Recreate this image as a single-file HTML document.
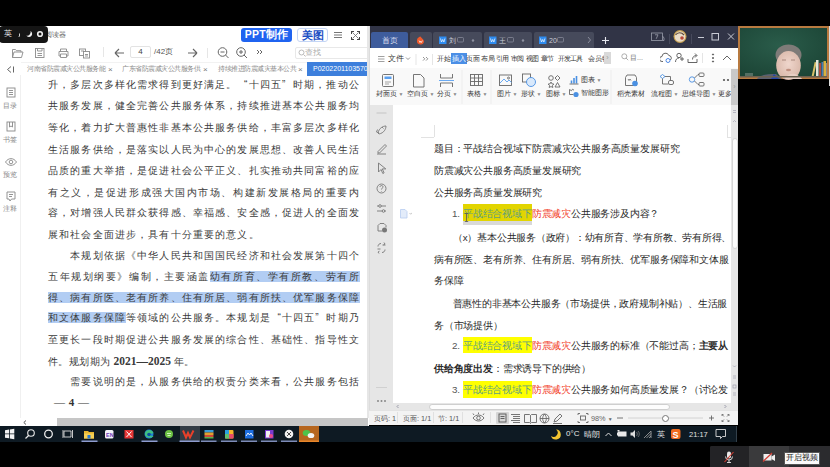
<!DOCTYPE html>
<html><head><meta charset="utf-8">
<style>
*{box-sizing:border-box;margin:0;padding:0}
html,body{width:830px;height:467px;overflow:hidden;background:#000}
body{position:relative;font-family:"Liberation Sans",sans-serif}
.a{position:absolute}
.t{position:absolute;white-space:nowrap;line-height:1}
/* PDF */
#pdf{left:0;top:26px;width:369px;height:400px;background:#fff;overflow:hidden}
.pl{position:absolute;left:48px;font-family:"Liberation Sans",sans-serif;font-size:10px;letter-spacing:1.14px;color:#3a3a3a;white-space:nowrap;line-height:12px}
.q{display:inline-block;width:11.14px;text-align:right}.q2{display:inline-block;width:11.14px;text-align:left}
.hl{background:#b2cdf3}
/* WPS */
#wps{left:369px;top:26px;width:369px;height:399px;background:#fff;overflow:hidden}
.wl{position:absolute;font-size:9.8px;letter-spacing:-0.2px;color:#2a2a2a;white-space:nowrap;line-height:12px}
.yl{color:#5f9f80}
.rd{color:#f23a26}
#task{left:0;top:426px;width:737px;height:16px;background:#0e1a23}
i{font-style:normal;display:inline-block;width:var(--cw)}
.tofu i{position:relative;-webkit-text-fill-color:transparent}
.tofu i::after{content:"";position:absolute;left:0.06em;width:0.86em;top:50%;height:0.82em;margin-top:-0.45em;box-sizing:border-box;border:0.1em solid currentColor;opacity:.62;background:linear-gradient(currentColor,currentColor) 50% 50%/100% 0.1em no-repeat,linear-gradient(currentColor,currentColor) 50% 50%/0.1em 100% no-repeat}
.tofu i:nth-child(3n+1)::after{border-width:0.1em 0;background:linear-gradient(currentColor,currentColor) 50% 50%/100% 0.1em no-repeat,linear-gradient(currentColor,currentColor) 30% 50%/0.1em 100% no-repeat,linear-gradient(currentColor,currentColor) 75% 50%/0.1em 100% no-repeat}
.tofu i:nth-child(4n+2)::after{border-width:0.1em;background:linear-gradient(currentColor,currentColor) 50% 35%/100% 0.1em no-repeat,linear-gradient(currentColor,currentColor) 50% 70%/100% 0.1em no-repeat}
.tofu i.p::after{left:0.12em;width:0.22em;height:0.22em;margin-top:0.12em;border:0;background:currentColor;opacity:.7}
.tofu i.s::after{display:none}
.tofu .pl i::after{opacity:.56}
.tofu .wl i::after{opacity:.72}
.tofu .pl i.p::after,.tofu .wl i.p::after{opacity:.7}

</style><script>(function(){try{var c=document.createElement('canvas');c.width=24;c.height=24;var x=c.getContext('2d');x.font='18px "Liberation Sans"';x.fillText('\u5347',2,19);var a=Array.prototype.join.call(x.getImageData(0,0,24,24).data);x.clearRect(0,0,24,24);x.fillText('\u591a',2,19);var b=Array.prototype.join.call(x.getImageData(0,0,24,24).data);if(a===b)document.documentElement.className+=' tofu';}catch(e){}})();</script></head><body>

<!-- PDF viewer -->
<div id="pdf" class="a">
  <!-- title row -->
  <div class="t" style="left: 45px; top: 5px; font-size: 7px; color: rgb(102, 102, 102); --cw: 7px;"><i>阅</i><i>读</i><i>器</i></div>
  <div class="a" style="left: 241px; top: 2px; width: 51px; height: 13.5px; background: rgb(31, 99, 240); border-radius: 3px; color: rgb(255, 255, 255); font-weight: bold; font-size: 10.5px; line-height: 13.5px; text-align: center; letter-spacing: 0.2px; --cw: 11.219px;">PPT<i>制</i><i>作</i></div>
  <div class="a" style="left: 297px; top: 2px; width: 31px; height: 14px; background: rgb(255, 255, 255); border: 1px solid rgb(196, 213, 245); border-radius: 3px; color: rgb(29, 79, 196); font-weight: bold; font-size: 10.5px; line-height: 12px; text-align: center; --cw: 11px;"><i>美</i><i>图</i></div>
  <svg class="a" style="left:332px;top:4px" width="12" height="10"><path d="M2 2.5H10M2 5H10M2 7.5H10" stroke="#666" stroke-width="0.9"></path></svg>
  <svg class="a" style="left:350px;top:4px" width="11" height="11"><path d="M2.5 2.5L8.5 8.5M8.5 2.5L2.5 8.5" stroke="#666" stroke-width="0.8"></path><path d="M1 1h3v1H2v2H1zM10 1H7v1h2v2h1zM1 10h3V9H2V7H1zM10 10H7V9h2V7h1z" fill="#444"></path></svg>
  <!-- toolbar -->
  <svg class="a" style="left:11px;top:21px" width="82" height="12" fill="none" stroke="#8a8a8a" stroke-width="0.9">
    <path d="M1.5 2.5h3l1 1.2h4.5v1.5M1.5 2.5v8h9l1.5-5.5h-9l-1.5 5.5"></path>
    <rect x="24.5" y="1.5" width="8.5" height="9"></rect><path d="M26.5 1.5v2.5h4.5v-2.5M26.5 6.5h4.5M26.5 8.5h4.5"></path>
    <path d="M48 4.5h9v4.5h-1.5M48 4.5v4.5h1.5M49.5 4.5v-2.5h6v2.5M49.5 7h6v3.5h-6z"></path>
    <rect x="68.5" y="2" width="6" height="6.5"></rect><rect x="72.5" y="4.5" width="6" height="6.5" fill="#fff"></rect><path d="M70 4h3M74 7.5h3M74 9h3"></path>
  </svg>
  <div class="a" style="left:103px;top:21px;width:1px;height:10px;background:#e6e6e6"></div>
  <svg class="a" style="left:113px;top:21px" width="12" height="12"><path d="M2 6h9M2 6l4-4M2 6l4 4" stroke="#666" stroke-width="1.1" fill="none"></path></svg>
  <div class="a" style="left:130px;top:20px;width:21px;height:12px;border:1px solid #e3e3e3;border-radius:2px;font-size:8px;color:#444;text-align:center;line-height:10px">4</div>
  <div class="t" style="left: 154px; top: 22px; font-size: 8px; color: rgb(85, 85, 85); --cw: 8.016px;">/42<i>页</i></div>
  <svg class="a" style="left:187px;top:21px" width="12" height="12"><path d="M1 6h9M10 6l-4-4M10 6l-4 4" stroke="#666" stroke-width="1.1" fill="none"></path></svg>
  <div class="a" style="left:207px;top:22px;width:1px;height:10px;background:#e6e6e6"></div>
  <svg class="a" style="left:216px;top:20px" width="50" height="14" fill="none" stroke="#666" stroke-width="1">
    <circle cx="6.5" cy="6" r="4.3"></circle><path d="M4.5 6h4M9.5 9l3 3"></path>
    <circle cx="25" cy="6" r="4.3"></circle><path d="M23 6h4M25 4v4M28 9l3 3"></path>
    <path d="M41 4l2 2-2 2M44 4l2 2-2 2"></path>
  </svg>
  <div class="a" style="left:295px;top:21px;width:80px;height:12px;border:1px solid #e8e8e8;border-radius:2px"></div>
  <svg class="a" style="left:298px;top:23px" width="8" height="8"><circle cx="3.5" cy="3.5" r="2.5" stroke="#bbb" fill="none"></circle><path d="M5.5 5.5l2 2" stroke="#bbb"></path></svg>
  <div class="t" style="left: 305px; top: 23px; font-size: 8px; color: rgb(170, 170, 170); --cw: 8px;"><i>查</i><i>找</i></div>
  <!-- tabs -->
  <svg class="a" style="left:6px;top:39px" width="9" height="9"><path d="M5 1.5L1.5 4.5 5 7.5M7.5 1.5v6" stroke="#666" fill="none" stroke-width="1"></path></svg>
  <div class="a" style="left:21px;top:36px;width:348px;height:1px;background:#f2f2f2"></div>
  <div class="t" style="left: 27px; top: 40px; font-size: 6.5px; letter-spacing: -0.5px; color: rgb(138, 138, 138); --cw: 6.5px;"><i>河</i><i>南</i><i>省</i><i>防</i><i>震</i><i>减</i><i>灾</i><i>公</i><i>共</i><i>服</i><i>务</i><i>能</i></div><div class="t" style="left:108px;top:39.5px;font-size:8px;color:#777">×</div>
  <div class="t" style="left: 122px; top: 40px; font-size: 6.5px; letter-spacing: -0.5px; color: rgb(138, 138, 138); --cw: 6.5px;"><i>广</i><i>东</i><i>省</i><i>防</i><i>震</i><i>减</i><i>灾</i><i>公</i><i>共</i><i>服</i><i>务</i><i>供</i></div><div class="t" style="left:203px;top:39.5px;font-size:8px;color:#777">×</div>
  <div class="t" style="left: 218px; top: 40px; font-size: 6.5px; letter-spacing: -0.5px; color: rgb(138, 138, 138); --cw: 6.5px;"><i>持</i><i>续</i><i>推</i><i>进</i><i>防</i><i>震</i><i>减</i><i>灾</i><i>基</i><i>本</i><i>公</i><i>共</i></div><div class="t" style="left:298px;top:39.5px;font-size:8px;color:#777">×</div>
  <div class="a" style="left:307px;top:36px;width:62px;height:13.5px;background:#3d7fdc;color:#fff;font-size:7px;line-height:13.5px;padding-left:6px;white-space:nowrap;overflow:hidden">P02022011035704</div>
  <div class="a" style="left:20px;top:49px;width:1px;height:343px;background:#f0f0f0"></div>
  <div class="a" style="left:367px;top:0;width:2px;height:400px;background:#e6e6e6"></div>
  <!-- sidebar -->
  <svg class="a" style="left:3.5px;top:59px" width="14" height="125" fill="none" stroke="#888" stroke-width="0.9">
    <rect x="3" y="3" width="8" height="9"></rect><path d="M5 5.5h4M5 7.5h4M5 9.5h4"></path>
    <rect x="3" y="37" width="8" height="9"></rect><path d="M5.5 37v5l1.5-1 1.5 1v-5"></path>
    <path d="M1.5 77c3-4.5 8-4.5 11 0c-3 4.5-8 4.5-11 0z"></path><circle cx="7" cy="77" r="1.8"></circle>
    <path d="M3 107h8v7H7.5l-1.5 2-1-2H3z"></path><path d="M5 109.5h4M5 111.5h3"></path>
  </svg>
  <div class="t" style="left: 3px; top: 75.5px; font-size: 7px; color: rgb(136, 136, 136); --cw: 7px;"><i>目</i><i>录</i></div>
  <div class="t" style="left: 3px; top: 110px; font-size: 7px; color: rgb(136, 136, 136); --cw: 7px;"><i>书</i><i>签</i></div>
  <div class="t" style="left: 3px; top: 144.5px; font-size: 7px; color: rgb(136, 136, 136); --cw: 7px;"><i>预</i><i>览</i></div>
  <div class="t" style="left: 3px; top: 178.5px; font-size: 7px; color: rgb(136, 136, 136); --cw: 7px;"><i>注</i><i>释</i></div>
  <!-- content -->
  <div class="pl" style="top: 53px; --cw: 11.141px;"><i>升</i><i class="p">，</i><i>多</i><i>层</i><i>次</i><i>多</i><i>样</i><i>化</i><i>需</i><i>求</i><i>得</i><i>到</i><i>更</i><i>好</i><i>满</i><i>足</i><i class="p">。</i><span class="q">“</span><i>十</i><i>四</i><i>五</i><span class="q2">”</span><i>时</i><i>期</i><i class="p">，</i><i>推</i><i>动</i><i>公</i></div>
  <div class="pl" style="top: 74px; --cw: 11.141px;"><i>共</i><i>服</i><i>务</i><i>发</i><i>展</i><i class="p">，</i><i>健</i><i>全</i><i>完</i><i>善</i><i>公</i><i>共</i><i>服</i><i>务</i><i>体</i><i>系</i><i class="p">，</i><i>持</i><i>续</i><i>推</i><i>进</i><i>基</i><i>本</i><i>公</i><i>共</i><i>服</i><i>务</i><i>均</i></div>
  <div class="pl" style="top: 96px; --cw: 11.141px;"><i>等</i><i>化</i><i class="p">，</i><i>着</i><i>力</i><i>扩</i><i>大</i><i>普</i><i>惠</i><i>性</i><i>非</i><i>基</i><i>本</i><i>公</i><i>共</i><i>服</i><i>务</i><i>供</i><i>给</i><i class="p">，</i><i>丰</i><i>富</i><i>多</i><i>层</i><i>次</i><i>多</i><i>样</i><i>化</i></div>
  <div class="pl" style="top: 118px; --cw: 11.141px;"><i>生</i><i>活</i><i>服</i><i>务</i><i>供</i><i>给</i><i class="p">，</i><i>是</i><i>落</i><i>实</i><i>以</i><i>人</i><i>民</i><i>为</i><i>中</i><i>心</i><i>的</i><i>发</i><i>展</i><i>思</i><i>想</i><i class="p">、</i><i>改</i><i>善</i><i>人</i><i>民</i><i>生</i><i>活</i></div>
  <div class="pl" style="top: 139px; --cw: 11.141px;"><i>品</i><i>质</i><i>的</i><i>重</i><i>大</i><i>举</i><i>措</i><i class="p">，</i><i>是</i><i>促</i><i>进</i><i>社</i><i>会</i><i>公</i><i>平</i><i>正</i><i>义</i><i class="p">、</i><i>扎</i><i>实</i><i>推</i><i>动</i><i>共</i><i>同</i><i>富</i><i>裕</i><i>的</i><i>应</i></div>
  <div class="pl" style="top: 161px; letter-spacing: 1.55px; --cw: 11.563px;"><i>有</i><i>之</i><i>义</i><i class="p">，</i><i>是</i><i>促</i><i>进</i><i>形</i><i>成</i><i>强</i><i>大</i><i>国</i><i>内</i><i>市</i><i>场</i><i class="p">、</i><i>构</i><i>建</i><i>新</i><i>发</i><i>展</i><i>格</i><i>局</i><i>的</i><i>重</i><i>要</i><i>内</i></div>
  <div class="pl" style="top: 181px; --cw: 11.141px;"><i>容</i><i class="p">，</i><i>对</i><i>增</i><i>强</i><i>人</i><i>民</i><i>群</i><i>众</i><i>获</i><i>得</i><i>感</i><i class="p">、</i><i>幸</i><i>福</i><i>感</i><i class="p">、</i><i>安</i><i>全</i><i>感</i><i class="p">，</i><i>促</i><i>进</i><i>人</i><i>的</i><i>全</i><i>面</i><i>发</i></div>
  <div class="pl" style="top: 203px; --cw: 11.141px;"><i>展</i><i>和</i><i>社</i><i>会</i><i>全</i><i>面</i><i>进</i><i>步</i><i class="p">，</i><i>具</i><i>有</i><i>十</i><i>分</i><i>重</i><i>要</i><i>的</i><i>意</i><i>义</i><i class="p">。</i></div>
  <div class="pl" style="top: 224px; --cw: 11.141px;"><i class="s">　</i><i class="s">　</i><i>本</i><i>规</i><i>划</i><i>依</i><i>据</i><i class="p">《</i><i>中</i><i>华</i><i>人</i><i>民</i><i>共</i><i>和</i><i>国</i><i>国</i><i>民</i><i>经</i><i>济</i><i>和</i><i>社</i><i>会</i><i>发</i><i>展</i><i>第</i><i>十</i><i>四</i><i>个</i></div>
  <div class="pl" style="top: 245px; letter-spacing: 1.55px; --cw: 11.563px;"><i>五</i><i>年</i><i>规</i><i>划</i><i>纲</i><i>要</i><i class="p">》</i><i>编</i><i>制</i><i class="p">，</i><i>主</i><i>要</i><i>涵</i><i>盖</i><span class="hl" style="--cw: 11.563px;"><i>幼</i><i>有</i><i>所</i><i>育</i><i class="p">、</i><i>学</i><i>有</i><i>所</i><i>教</i><i class="p">、</i><i>劳</i><i>有</i><i>所</i></span></div>
  <div class="pl" style="top:266px"><span class="hl" style="--cw: 11.141px;"><i>得</i><i class="p">、</i><i>病</i><i>有</i><i>所</i><i>医</i><i class="p">、</i><i>老</i><i>有</i><i>所</i><i>养</i><i class="p">、</i><i>住</i><i>有</i><i>所</i><i>居</i><i class="p">、</i><i>弱</i><i>有</i><i>所</i><i>扶</i><i class="p">、</i><i>优</i><i>军</i><i>服</i><i>务</i><i>保</i><i>障</i></span></div>
  <div class="pl" style="top: 286px; --cw: 11.141px;"><span class="hl" style="--cw: 11.141px;"><i>和</i><i>文</i><i>体</i><i>服</i><i>务</i><i>保</i><i>障</i></span><i>等</i><i>领</i><i>域</i><i>的</i><i>公</i><i>共</i><i>服</i><i>务</i><i class="p">。</i><i>本</i><i>规</i><i>划</i><i>是</i><span class="q">“</span><i>十</i><i>四</i><i>五</i><span class="q2">”</span><i>时</i><i>期</i><i>乃</i></div>
  <div class="pl" style="top: 308px; --cw: 11.141px;"><i>至</i><i>更</i><i>长</i><i>一</i><i>段</i><i>时</i><i>期</i><i>促</i><i>进</i><i>公</i><i>共</i><i>服</i><i>务</i><i>发</i><i>展</i><i>的</i><i>综</i><i>合</i><i>性</i><i class="p">、</i><i>基</i><i>础</i><i>性</i><i class="p">、</i><i>指</i><i>导</i><i>性</i><i>文</i></div>
  <div class="pl" style="top: 329px; letter-spacing: 0.45px; --cw: 10.453px;"><i>件</i><i class="p">。</i><i>规</i><i>划</i><i>期</i><i>为</i><span style="letter-spacing:0;font-family:'Liberation Serif',serif;font-size:11.5px;font-weight:bold;color:#3a3a3a"> 2021—2025 </span><i>年</i><i class="p">。</i></div>
  <div class="pl" style="top: 350px; --cw: 11.141px;"><i class="s">　</i><i class="s">　</i><i>需</i><i>要</i><i>说</i><i>明</i><i>的</i><i>是</i><i class="p">，</i><i>从</i><i>服</i><i>务</i><i>供</i><i>给</i><i>的</i><i>权</i><i>责</i><i>分</i><i>类</i><i>来</i><i>看</i><i class="p">，</i><i>公</i><i>共</i><i>服</i><i>务</i><i>包</i><i>括</i></div>
  <div class="pl" style="top:369.5px;left:54px;font-family:'Liberation Serif',serif;font-size:11px;letter-spacing:0.5px;font-weight:bold;color:#333">— 4 —</div>
  <!-- h scrollbar -->
  <div class="a" style="left:0;top:392px;width:369px;height:8px;background:#fff"></div>
  <div class="a" style="left:57px;top:392px;width:311px;height:8px;background:#c6c6c6"></div>
  <svg class="a" style="left:22px;top:393px" width="6" height="7"><path d="M4 1.5L1.8 3.5 4 5.5" fill="none" stroke="#444" stroke-width="0.9"></path></svg>
</div>

<!-- IME toolbar -->
<div class="a" style="left:-1px;top:26px;width:49px;height:16.5px;background:#151515;border-radius:4px"></div>
<div class="t" style="left: 4px; top: 30px; font-size: 8px; color: rgb(238, 238, 238); --cw: 8px;"><i>英</i></div>
<svg class="a" style="left:16px;top:28px" width="30" height="12"><path d="M3.5 5.5v2.5l-0.8 1" stroke="#ccc" stroke-width="1" fill="none"></path><path d="M14.5 3a3.2 3.2 0 1 1-4.2 4.6 3.6 3.6 0 0 0 4.2-4.6z" fill="#eee"></path><circle cx="24" cy="6" r="2.3" fill="none" stroke="#eee" stroke-width="1.6"></circle></svg>

<!-- WPS -->
<div id="wps" class="a">
  <div class="a" style="left:0;top:0;width:369px;height:21.5px;background:#313446"></div>
  <div class="a" style="left: 2px; top: 6px; width: 37px; height: 15.5px; background: rgb(62, 92, 156); border-radius: 2px 2px 0px 0px; color: rgb(216, 222, 240); font-size: 7.5px; line-height: 17px; text-align: center; --cw: 8px;"><i>首</i><i>页</i></div>
  <div class="a" style="left:41px;top:6px;width:22px;height:15.5px;background:#464a5b;border-radius:2px 2px 0 0"></div>
  <svg class="a" style="left:47px;top:10px" width="9" height="9"><path d="M1 4.5C1 1.5 4 0.5 4.5 0.5 5 2 8 3 8 5.5A3.5 3.5 0 0 1 1 4.5z" fill="#ee5a2c"></path><path d="M3 4.5l1 2 0.7-1.3 0.7 1.3 1-2" stroke="#fff" stroke-width="0.7" fill="none"></path></svg>
  <div class="a" style="left:64px;top:6px;width:49px;height:15.5px;background:#464a5b;border-radius:2px 2px 0 0"></div>
  <div class="a" style="left:115px;top:6px;width:48px;height:15.5px;background:#464a5b;border-radius:2px 2px 0 0"></div>
  <div class="a" style="left:165px;top:6px;width:60px;height:15.5px;background:#464a5b;border-radius:2px 2px 0 0"></div>
  <svg class="a" style="left:69px;top:10px" width="160" height="9">
    <rect x="1" y="0.5" width="7.5" height="7.5" fill="#2f8cf0"></rect><path d="M2.5 2.5l1 3.5 1.2-2.5 1.2 2.5 1-3.5" stroke="#fff" stroke-width="0.7" fill="none"></path>
    <rect x="19.5" y="1.5" width="6" height="4.5" rx="1" fill="none" stroke="#8e91a0" stroke-width="0.7"></rect><circle cx="35" cy="4.5" r="1.2" fill="#8e91a0"></circle>
    <rect x="51" y="0.5" width="7.5" height="7.5" fill="#2f8cf0"></rect><path d="M52.5 2.5l1 3.5 1.2-2.5 1.2 2.5 1-3.5" stroke="#fff" stroke-width="0.7" fill="none"></path>
    <rect x="69.5" y="1.5" width="6" height="4.5" rx="1" fill="none" stroke="#8e91a0" stroke-width="0.7"></rect><circle cx="85" cy="4.5" r="1.2" fill="#8e91a0"></circle>
    <rect x="101" y="0.5" width="7.5" height="7.5" fill="#2f8cf0"></rect><path d="M102.5 2.5l1 3.5 1.2-2.5 1.2 2.5 1-3.5" stroke="#fff" stroke-width="0.7" fill="none"></path>
    <rect x="119.5" y="1.5" width="6" height="4.5" rx="1" fill="none" stroke="#8e91a0" stroke-width="0.7"></rect><path d="M150 1l2.5 3-2.5 3" stroke="#9a9dab" stroke-width="0.8" fill="none"></path>
  </svg>
  <div class="t" style="left: 80px; top: 10.5px; font-size: 7px; color: rgb(201, 204, 216); --cw: 7px;"><i>刘</i></div>
  <div class="t" style="left: 130px; top: 10.5px; font-size: 7px; color: rgb(201, 204, 216); --cw: 7px;"><i>王</i></div>
  <div class="t" style="left:180px;top:10.5px;font-size:7px;color:#c9ccd8">20</div>
  <svg class="a" style="left:230px;top:4px" width="139" height="18">
    <path d="M3 10.5h7M6.5 7v7" stroke="#e6e8ef" stroke-width="1.1"></path>
    <rect x="52.5" y="3" width="11" height="7.5" fill="none" stroke="#9a9dab" stroke-width="0.8"></rect><path d="M63.5 6l1.5 2v2.5h-1.5" fill="none" stroke="#9a9dab" stroke-width="0.8"></path><path d="M56 4.8h3l-1.8 4" stroke="#9a9dab" stroke-width="0.8" fill="none"></path>
    <path d="M70.5 4v10M92.5 4v10" stroke="#4d5062" stroke-width="0.8"></path>
    <circle cx="81" cy="6.5" r="6.5" fill="#c6a052"></circle><circle cx="81" cy="6.5" r="5.3" fill="#e9dcc8"></circle><path d="M76.5 5c2-3 6-3 8.5 0" stroke="#5c4a3a" stroke-width="1.2" fill="none"></path><circle cx="83" cy="8" r="1.8" fill="#b84a3a"></circle>
    <path d="M99 7.5h6" stroke="#c8cad4" stroke-width="1"></path>
    <rect x="113" y="3.5" width="6.5" height="6.5" fill="none" stroke="#c8cad4" stroke-width="1"></rect>
    <path d="M129 3.5l6 6M135 3.5l-6 6" stroke="#c8cad4" stroke-width="1"></path>
  </svg>
  <!-- menu row -->
  <div class="a" style="left:0;top:21.5px;width:369px;height:20px;background:#fff"></div>
  <svg class="a" style="left:8px;top:27px" width="60" height="12" fill="none" stroke="#555" stroke-width="0.9">
    <path d="M1 3.5h6.5M1 6h6.5M1 8.5h6.5" stroke="#888" stroke-width="0.8"></path><path d="M29 4.5l2 2 2-2" stroke="#888"></path>
    <path d="M39 1v11" stroke="#e2e2e2"></path><path d="M46 4l1.8 1.8L46 7.6M49 4l1.8 1.8L49 7.6" stroke="#888"></path><path d="M55.5 1v11" stroke="#e2e2e2"></path>
  </svg>
  <div class="t" style="left: 19px; top: 29px; font-size: 7.5px; color: rgb(51, 51, 51); --cw: 8px;"><i>文</i><i>件</i></div>
  <div class="a" style="left:82px;top:27px;width:15.5px;height:10.5px;background:#4b8fe6"></div>
  <div class="t" style="left: 68px; top: 29.3px; font-size: 7.3px; color: rgb(51, 51, 51); letter-spacing: 0.25px; --cw: 7.25px;"><i>开</i><i>始</i><span style="color: rgb(255, 255, 255); --cw: 7.25px;"><i>插</i><i>入</i></span><i>页</i><i>面</i><i>布</i><i>局</i></div>
  <div class="t" style="left: 127px; top: 29.3px; font-size: 7px; letter-spacing: -0.8px; color: rgb(51, 51, 51); --cw: 6.203px;"><i>引</i><i>用</i></div>
  <div class="t" style="left: 142px; top: 29.3px; font-size: 7px; letter-spacing: -0.8px; color: rgb(51, 51, 51); --cw: 6.203px;"><i>审</i><i>阅</i></div>
  <div class="t" style="left: 156.5px; top: 29.3px; font-size: 7px; letter-spacing: -0.8px; color: rgb(51, 51, 51); --cw: 6.203px;"><i>视</i><i>图</i></div>
  <div class="t" style="left: 171.5px; top: 29.3px; font-size: 7px; letter-spacing: -0.8px; color: rgb(51, 51, 51); --cw: 6.203px;"><i>章</i><i>节</i></div>
  <div class="t" style="left: 188.5px; top: 29.3px; font-size: 7.3px; letter-spacing: -0.85px; color: rgb(51, 51, 51); --cw: 6.156px;"><i>开</i><i>发</i><i>工</i><i>具</i></div>
  <div class="t" style="left: 219px; top: 29.3px; font-size: 7px; color: rgb(51, 51, 51); --cw: 7px;"><i>会</i><i>员</i><i>特</i></div>
  <div class="a" style="left:235px;top:26px;width:7px;height:12px;background:#d9d9d9;color:#999;font-size:7px;line-height:12px;text-align:center">›</div>
  <div class="a" style="left:242px;top:21.5px;width:127px;height:20px;background:#fff"></div>
  <svg class="a" style="left:252px;top:27px" width="8" height="8"><circle cx="3.3" cy="3.3" r="2.5" fill="none" stroke="#999" stroke-width="0.8"></circle><path d="M5 5l2.2 2.2" stroke="#999" stroke-width="0.8"></path></svg>
  <div class="t" style="left: 261px; top: 28px; font-size: 7px; color: rgb(119, 119, 119); --cw: 7px;"><i>目</i>...</div>
  <svg class="a" style="left:290.5px;top:25px" width="80" height="14" fill="none" stroke="#555" stroke-width="0.9">
    <path d="M3 10.5H2a2.5 2.5 0 0 1 0-5 3.5 3.5 0 0 1 6.8-1 2.5 2.5 0 0 1 1.5 4.5"></path><circle cx="8" cy="9.5" r="2" stroke="#3a7be0"></circle>
    <circle cx="19" cy="4.5" r="2.2"></circle><path d="M15.5 11c0-2.5 1.5-4 3.5-4M22 6v4M20 8h4"></path>
    <path d="M28 8v3.5h9V8M32.5 8.5c0-2.5 1.5-4 4-4M35 2.5l2 2-2 2"></path>
    <path d="M42.5 2v10" stroke="#e2e2e2"></path>
    <circle cx="53" cy="3.5" r="0.6" fill="#555"></circle><circle cx="53" cy="7" r="0.6" fill="#555"></circle><circle cx="53" cy="10.5" r="0.6" fill="#555"></circle>
    <path d="M63 9l4-4 4 4"></path>
  </svg>
  <!-- ribbon -->
  <div class="a" style="left:0;top:41.5px;width:369px;height:37.5px;background:#f9f9f9"></div>
  <svg class="a" style="left:0;top:41px" width="369" height="38">
    <g fill="none" stroke="#666" stroke-width="0.9">
      <rect x="13.5" y="7.5" width="11" height="12" rx="1"></rect><rect x="15.5" y="9.5" width="7" height="2.5" fill="#5aa0f0" stroke="none"></rect><path d="M16 15h6M16 17h4" stroke="#999"></path>
      <path d="M44.5 7.5h7l3.5 3.5v9h-10.5z"></path>
      <path d="M71.5 7v4h12V7M71.5 20v-4h12v4"></path><path d="M70 13.5h15" stroke="#5aa0f0"></path>
      <path d="M93 3v34" stroke="#ebebeb"></path>
      <rect x="101.5" y="7.5" width="12" height="11"></rect><path d="M101.5 11h12M101.5 14.5h12M105.5 7.5v11M109.5 7.5v11"></path>
      <path d="M122 3v34" stroke="#ebebeb"></path>
      <rect x="130.5" y="8" width="12" height="10.5"></rect><path d="M131 16l4-4 3 3 2-2 2.5 2.5" stroke="#5aa0f0"></path><circle cx="139.5" cy="11" r="1"></circle>
      <rect x="153.5" y="7" width="8" height="8"></rect><circle cx="162" cy="15" r="4.5" fill="#d9e9fb" stroke="#4a90e2"></circle>
      <circle cx="182" cy="11" r="2.3"></circle><path d="M188.5 8.5l2.5 2.5-2.5 2.5-2.5-2.5z"></path><path d="M182 15l0.9 1.8 2 .3-1.45 1.4.35 2-1.8-.95-1.8.95.35-2-1.45-1.4 2-.3z"></path><path d="M188.5 15.5l2.5 4.5h-5z"></path>
      <path d="M202.5 16.5v-3M205 16.5v-5.5M207.5 16.5v-7.5" stroke="#4a90e2" stroke-width="1.6"></path><path d="M200.5 17h9"></path>
      <path d="M200.5 22.5v5h4M200.5 22.5l2 1.2 1-1.5 1.5 1"></path><circle cx="207" cy="27.5" r="2.6" fill="#4a90e2" stroke="none"></circle>
      <path d="M242 3v34" stroke="#ebebeb"></path>
      <path d="M256.5 10.5v8h11v-8l-1.5-2.5h-8z"></path><path d="M259 12l1 1.5 1-1.5 1 1.5" stroke="#777"></path><circle cx="266" cy="16.5" r="2.8" fill="#4a90e2" stroke="none"></circle>
      <path d="M291 9.5l2.5-2 2.5 2-2.5 2z" stroke="#4a90e2"></path><path d="M296 9.5h5.5v4M293.5 11.5v5.5h6"></path><rect x="299.5" y="13.5" width="5" height="4" rx="1.5"></rect>
      <circle cx="323" cy="12.5" r="2.7" stroke="#4a90e2"></circle><path d="M325.5 11l3.5-3.5h1M325.5 14l3.5 3.5h1"></path><rect x="330" y="6" width="5" height="3.5" rx="1"></rect><rect x="330" y="15.5" width="5" height="3.5" rx="1"></rect>
    </g>
    <circle cx="355" cy="13" r="1.1" fill="#555"></circle><circle cx="359" cy="13" r="1.1" fill="#555"></circle>
  </svg>
  <div class="t" style="left: 7px; top: 63.5px; font-size: 7.3px; color: rgb(51, 51, 51); --cw: 7px;"><i>封</i><i>面</i><i>页</i><span style="font-size:5px;color:#888"> ▼</span></div>
  <div class="t" style="left: 38px; top: 63.5px; font-size: 7.3px; color: rgb(51, 51, 51); --cw: 7px;"><i>空</i><i>白</i><i>页</i><span style="font-size:5px;color:#888"> ▼</span></div>
  <div class="t" style="left: 68px; top: 63.5px; font-size: 7.3px; color: rgb(51, 51, 51); --cw: 7px;"><i>分</i><i>页</i><span style="font-size:5px;color:#888"> ▼</span></div>
  <div class="t" style="left: 98px; top: 63.5px; font-size: 7.3px; color: rgb(51, 51, 51); --cw: 7px;"><i>表</i><i>格</i><span style="font-size:5px;color:#888"> ▼</span></div>
  <div class="t" style="left: 128px; top: 63.5px; font-size: 7.3px; color: rgb(51, 51, 51); --cw: 7px;"><i>图</i><i>片</i><span style="font-size:5px;color:#888"> ▼</span></div>
  <div class="t" style="left: 152px; top: 63.5px; font-size: 7.3px; color: rgb(51, 51, 51); --cw: 7px;"><i>形</i><i>状</i><span style="font-size:5px;color:#888"> ▼</span></div>
  <div class="t" style="left: 177px; top: 63.5px; font-size: 7.3px; color: rgb(51, 51, 51); --cw: 7px;"><i>图</i><i>标</i><span style="font-size:5px;color:#888"> ▼</span></div>
  <div class="t" style="left: 212px; top: 50px; font-size: 7.3px; color: rgb(51, 51, 51); --cw: 7px;"><i>图</i><i>表</i><span style="font-size:5px;color:#888"> ▼</span></div>
  <div class="t" style="left: 212px; top: 62.5px; font-size: 7.3px; color: rgb(51, 51, 51); --cw: 7px;"><i>智</i><i>能</i><i>图</i><i>形</i></div>
  <div class="t" style="left: 248px; top: 63.5px; font-size: 7px; color: rgb(51, 51, 51); --cw: 7px;"><i>稻</i><i>壳</i><i>素</i><i>材</i></div>
  <div class="t" style="left: 282px; top: 63.5px; font-size: 7.3px; color: rgb(51, 51, 51); --cw: 7px;"><i>流</i><i>程</i><i>图</i><span style="font-size:5px;color:#888"> ▼</span></div>
  <div class="t" style="left: 313px; top: 63.5px; font-size: 7.3px; color: rgb(51, 51, 51); --cw: 7px;"><i>思</i><i>维</i><i>导</i><i>图</i><span style="font-size:5px;color:#888"> ▼</span></div>
  <div class="t" style="left: 349px; top: 63.5px; font-size: 7.3px; color: rgb(51, 51, 51); --cw: 7px;"><i>更</i><i>多</i></div>
  <div class="a" style="left:362px;top:43px;width:7px;height:36px;background:#c9c9c9;color:#999;font-size:7px;line-height:36px;text-align:center">›</div>
  <!-- body -->
  <div class="a" style="left:0;top:79px;width:24px;height:306px;background:#e6e6e6"></div>
  <div class="a" style="left:0;top:0;width:1px;height:399px;background:#dcdcdc"></div>
  <div class="a" style="left:362px;top:79px;width:7px;height:298px;background:#e6e6e6"></div>
    <div class="wl" style="left: 65px; top: 117px; --cw: 9.813px;"><i>题</i><i>目</i><i class="p">：</i><i>平</i><i>战</i><i>结</i><i>合</i><i>视</i><i>域</i><i>下</i><i>防</i><i>震</i><i>减</i><i>灾</i><i>公</i><i>共</i><i>服</i><i>务</i><i>高</i><i>质</i><i>量</i><i>发</i><i>展</i><i>研</i><i>究</i></div>
  <div class="wl" style="left: 65px; top: 139px; --cw: 9.813px;"><i>防</i><i>震</i><i>减</i><i>灾</i><i>公</i><i>共</i><i>服</i><i>务</i><i>高</i><i>质</i><i>量</i><i>发</i><i>展</i><i>研</i><i>究</i></div>
  <div class="wl" style="left: 65px; top: 160.5px; --cw: 9.813px;"><i>公</i><i>共</i><i>服</i><i>务</i><i>高</i><i>质</i><i>量</i><i>发</i><i>展</i><i>研</i><i>究</i></div>
  <div class="a" style="left:94px;top:178px;width:69px;height:17px;background:#e2d500"></div>
  <div class="wl" style="left: 83px; top: 182px; --cw: 9.813px;"><span style="display:inline-block;width:11px;color:#555">1.</span><span class="yl" style="--cw: 9.813px;"><i>平</i><i>战</i><i>结</i><i>合</i><i>视</i><i>域</i><i>下</i></span><span class="rd" style="--cw: 9.813px;"><i>防</i><i>震</i><i>减</i><i>灾</i></span><i>公</i><i>共</i><i>服</i><i>务</i><i>涉</i><i>及</i><i>内</i><i>容</i><i class="p">？</i></div>
  <div class="a" style="left:94px;top:310.5px;width:69px;height:16.5px;background:#ffff00"></div>
  <div class="wl" style="left: 83px; top: 314px; --cw: 9.813px;"><span style="display:inline-block;width:11px;color:#555">2.</span><span class="yl" style="--cw: 9.813px;"><i>平</i><i>战</i><i>结</i><i>合</i><i>视</i><i>域</i><i>下</i></span><span class="rd" style="--cw: 9.813px;"><i>防</i><i>震</i><i>减</i><i>灾</i></span><i>公</i><i>共</i><i>服</i><i>务</i><i>的</i><i>标</i><i>准</i><i class="p">（</i><i>不</i><i>能</i><i>过</i><i>高</i><i class="p">；</i><b style="--cw: 9.813px;"><i>主</i><i>要</i><i>从</i></b></div>
  <div class="a" style="left:94px;top:355px;width:69px;height:16.5px;background:#ffff00"></div>
  <div class="wl" style="left: 83px; top: 358px; --cw: 9.813px;"><span style="display:inline-block;width:11px;color:#555">3.</span><span class="yl" style="--cw: 9.813px;"><i>平</i><i>战</i><i>结</i><i>合</i><i>视</i><i>域</i><i>下</i></span><span class="rd" style="--cw: 9.813px;"><i>防</i><i>震</i><i>减</i><i>灾</i></span><i>公</i><i>共</i><i>服</i><i>务</i><i>如</i><i>何</i><i>高</i><i>质</i><i>量</i><i>发</i><i>展</i><i class="p">？</i><i class="p">（</i><i>讨</i><i>论</i><i>发</i></div>
  <div class="wl" style="left: 84px; top: 205.5px; letter-spacing: -0.24px; --cw: 9.766px;"><i class="p">（</i>x<i class="p">）</i><i>基</i><i>本</i><i>公</i><i>共</i><i>服</i><i>务</i><i class="p">（</i><i>政</i><i>府</i><i class="p">）</i><i class="p">：</i><i>幼</i><i>有</i><i>所</i><i>育</i><i class="p">、</i><i>学</i><i>有</i><i>所</i><i>教</i><i class="p">、</i><i>劳</i><i>有</i><i>所</i><i>得</i><i class="p">、</i></div>
  <div class="wl" style="left: 65px; top: 227.5px; --cw: 9.813px;"><i>病</i><i>有</i><i>所</i><i>医</i><i class="p">、</i><i>老</i><i>有</i><i>所</i><i>养</i><i class="p">、</i><i>住</i><i>有</i><i>所</i><i>居</i><i class="p">、</i><i>弱</i><i>有</i><i>所</i><i>扶</i><i class="p">、</i><i>优</i><i>军</i><i>服</i><i>务</i><i>保</i><i>障</i><i>和</i><i>文</i><i>体</i><i>服</i></div>
  <div class="wl" style="left: 65px; top: 249px; --cw: 9.813px;"><i>务</i><i>保</i><i>障</i></div>
  <div class="wl" style="left: 83.5px; top: 271.5px; --cw: 9.813px;"><i>普</i><i>惠</i><i>性</i><i>的</i><i>非</i><i>基</i><i>本</i><i>公</i><i>共</i><i>服</i><i>务</i><i class="p">（</i><i>市</i><i>场</i><i>提</i><i>供</i><i class="p">，</i><i>政</i><i>府</i><i>规</i><i>制</i><i>补</i><i>贴</i><i class="p">）</i><i class="p">、</i><i>生</i><i>活</i><i>服</i></div>
  <div class="wl" style="left: 65px; top: 293.5px; --cw: 9.813px;"><i>务</i><i class="p">（</i><i>市</i><i>场</i><i>提</i><i>供</i><i class="p">）</i></div>
  <div class="wl" style="left: 65px; top: 336.5px; --cw: 9.813px;"><b style="--cw: 9.813px;"><i>供</i><i>给</i><i>角</i><i>度</i><i>出</i><i>发</i></b><i class="p">：</i><i>需</i><i>求</i><i>诱</i><i>导</i><i>下</i><i>的</i><i>供</i><i>给</i><i class="p">）</i></div>
<!-- hscroll + status -->
  <div class="a" style="left:24px;top:377px;width:345px;height:7px;background:#e6e6e6"></div>
  <div class="a" style="left:59.5px;top:377.5px;width:241px;height:6.5px;background:#fdfdfd;border:1px solid #cfcfcf;border-radius:4px"></div>
  <svg class="a" style="left:26px;top:377px" width="6" height="7"><path d="M3.5 2l-1.5 1.5 1.5 1.5" fill="none" stroke="#889" stroke-width="0.8"></path></svg>
  <svg class="a" style="left:353px;top:377px" width="6" height="7"><path d="M2.5 2l1.5 1.5-1.5 1.5" fill="none" stroke="#889" stroke-width="0.8"></path></svg>
  <div class="a" style="left:0;top:384px;width:369px;height:15px;background:#f3f3f3;border-top:1px solid #e3e3e3"></div>
  <div class="t" style="left: 5px; top: 388.5px; font-size: 7.3px; color: rgb(85, 85, 85); --cw: 7px;"><i>页</i><i>码</i>: 1</div>
  <div class="a" style="left:28px;top:386px;width:1px;height:11px;background:#e0e0e0"></div>
  <div class="t" style="left: 34px; top: 388.5px; font-size: 7.3px; color: rgb(85, 85, 85); --cw: 7px;"><i>页</i><i>面</i>: 1/1</div>
  <div class="a" style="left:64px;top:386px;width:1px;height:11px;background:#e0e0e0"></div>
  <div class="t" style="left: 69px; top: 388.5px; font-size: 7.3px; color: rgb(85, 85, 85); --cw: 7px;"><i>节</i>: 1/1</div>
  <div class="a" style="left:93px;top:386px;width:1px;height:11px;background:#e0e0e0"></div>
  <div class="a" style="left:121px;top:386px;width:1px;height:11px;background:#e0e0e0"></div>
  <div class="a" style="left:127px;top:386px;width:13px;height:12px;background:#d6d6d6;border-radius:1px"></div>
  <svg class="a" style="left:100px;top:385px" width="269" height="14" fill="none" stroke="#666" stroke-width="0.9">
    <path d="M4 7c3-4 8-4 11 0-3 4-8 4-11 0z"></path><circle cx="9.5" cy="7" r="1.8"></circle><path d="M5 4l-1-1.5M9.5 3V1.5M14 4l1-1.5"></path>
    <rect x="30" y="3" width="7" height="8" stroke="#555"></rect><path d="M31.5 5.5h4M31.5 7.5h4" stroke="#555"></path>
    <path d="M42 3.5h9M44 5.5h7M44 7.5h7M42 9.5h9M44 11.5h7"></path>
    <path d="M55.5 3.5h5l1 1 1-1h5v8h-5l-1 1-1-1h-5zM61.5 4.5v7"></path>
    <circle cx="75.5" cy="7.5" r="4.5"></circle><path d="M71 7.5h9M75.5 3c-2.5 3-2.5 6 0 9M75.5 3c2.5 3 2.5 6 0 9"></path>
    <path d="M85 11l1-3 5-5 2 2-5 5zM84 12.5h9"></path>
    <path d="M109 4v-1.5h2M117 2.5h2V4M109 10v1.5h2M117 11.5h2V10"></path><rect x="111.5" y="5" width="5" height="4"></rect>
    <path d="M148 7h6"></path><path d="M159 7h75" stroke="#c9c9c9" stroke-width="0.8"></path>
    <path d="M240 7h5M242.5 4.5v5"></path>
    <path d="M253 3.5l2 2M253 3.5v1.5M253 3.5h1.5M260 3.5l-2 2M260 3.5v1.5M260 3.5h-1.5M253 10.5l2-2M253 10.5V9M253 10.5h1.5M260 10.5l-2-2M260 10.5V9M260 10.5h-1.5" stroke-width="0.8"></path>
  </svg>
  <div class="a" style="left:293px;top:389px;width:7px;height:7px;background:#fff;border:1px solid #777;border-radius:50%"></div>
  <div class="t" style="left:222px;top:388.5px;font-size:7.3px;color:#666">98% <span style="font-size:5px">▼</span></div>
  <!-- sidebar icons -->
  <svg class="a" style="left:0;top:79px" width="24" height="298" fill="none" stroke="#777" stroke-width="0.9">
    <path d="M7.5 8h10" stroke="#c4c4c4" stroke-width="1"></path>
    <path d="M9 28c1-5 5-7 8-7-0 3-2 7-7 8zM8.5 24.5l-1 2.5 2.5 1M13 22l1.5 1.5"></path>
    <path d="M9 46.5l7-7 1.5 1.5-7 7H9zM8 49h9"></path>
    <path d="M9.5 58v9l2.5-2.5 1.8 4 1.3-.6-1.8-4h3.5z"></path>
    <circle cx="12.5" cy="83.5" r="4.5"></circle><path d="M11 82c0-2 3-2 3 0 0 1-1.5 1.2-1.5 2.5M12.5 86v.5"></path>
    <path d="M8 101h9M8 106h9"></path><circle cx="11" cy="101" r="1.3" fill="#e6e6e6"></circle><circle cx="14.5" cy="106" r="1.3" fill="#e6e6e6"></circle>
    <path d="M9 126v-5.5l2-2h4l2 2v2M9 126h4"></path><circle cx="15.5" cy="125" r="2.5" fill="#777" stroke="none"></circle>
    <path d="M9 141.5c0-2 1.5-3 3-3M16 144.5c0 2-1.5 3-3 3M15 137.5l1 1.5-1.5 .8M10 148.5l-1-1.5 1.5-.8M8.5 144h3M13.5 140h3"></path>
    
  </svg>
  <div class="a" style="left:7.5px;top:373.5px;width:2.2px;height:2.2px;border-radius:50%;background:#888;box-shadow:3.5px 0 #888,7px 0 #888"></div>
  <div class="a" style="left:7px;top:361px;width:11px;height:1px;background:#d0d0d0"></div>
  <!-- doc icon + corner marks -->
  <svg class="a" style="left:30px;top:183px" width="16" height="10"><path d="M1.5 0.5h4.5l2 2v6.5H1.5z" fill="#e3ecfa" stroke="#b8cdf0" stroke-width="0.8"></path><path d="M10.5 4l1.2 1.2 1.2-1.2" stroke="#aaa" stroke-width="0.7" fill="none"></path></svg>
  <div class="a" style="left:64.5px;top:99px;width:1px;height:12px;background:#e2e2e2"></div>
  <div class="a" style="left:52px;top:111px;width:13px;height:1px;background:#e2e2e2"></div>
  <div class="a" style="left:357.5px;top:99px;width:1px;height:12px;background:#e2e2e2"></div>
  <div class="a" style="left:358px;top:111px;width:4px;height:1px;background:#e2e2e2"></div>
  <!-- v scrollbar -->
  <div class="a" style="left:362.5px;top:112px;width:6px;height:111px;background:#fbfbfb;border:1px solid #d4d4d4;border-radius:3px"></div>
  <svg class="a" style="left:362px;top:80px" width="7" height="297" fill="none" stroke="#a0a0b0" stroke-width="0.7">
    <path d="M2 4.5h3M2 6.5h3"></path><path d="M2 16l1.5-1.5L5 16"></path>
    <path d="M2 259.5l1.5 1.5 1.5-1.5"></path><path d="M2 270h3M2 272h3"></path><rect x="2" y="279" width="3" height="3"></rect><path d="M2 287h3M2 289h3"></path>
  </svg>
  <!-- cursor + tooltip edge -->
  <div class="a" style="left:94px;top:195px;width:69px;height:4px;background:#d9d9d9"></div>
  <svg class="a" style="left:94px;top:186px" width="8" height="11"><path d="M1.8 1.5h3.4M3.5 1.5v8M1.8 9.5h3.4" stroke="#555" stroke-width="0.8"></path></svg>
</div>

<!-- webcam -->
<svg class="a" style="left:737px;top:25px" width="93" height="55">
  <defs>
    <radialGradient id="bd" cx="0.45" cy="0.35" r="0.7"><stop offset="0" stop-color="#2a5c4a"></stop><stop offset="1" stop-color="#1c4536"></stop></radialGradient>
    <radialGradient id="fc" cx="0.5" cy="0.45" r="0.6"><stop offset="0" stop-color="#efd6cc"></stop><stop offset="0.8" stop-color="#dcbcae"></stop><stop offset="1" stop-color="#c9a595"></stop></radialGradient>
  </defs>
  <rect x="1" y="1" width="91" height="53" fill="#b87a40"></rect>
  <rect x="3" y="3" width="87" height="49" fill="url(#bd)"></rect>
  <ellipse cx="51.5" cy="30" rx="13" ry="10.5" fill="#7e7b78"></ellipse>
  <ellipse cx="51.5" cy="40.5" rx="12.3" ry="14.5" fill="url(#fc)"></ellipse>
  <path d="M45 35h4M54 35h4" stroke="#9a7a70" stroke-width="0.8"></path>
  <ellipse cx="51.5" cy="45" rx="2.5" ry="1.3" fill="#c09080"></ellipse>
  <path d="M20 54c2-4 10-5 19-5l6 5z" fill="#5a6070"></path>
  <path d="M37 49l5 5h-8z" fill="#2446a8"></path>
  <path d="M48 54c1-4 6-6 10-5 3 1 6 3 7 5z" fill="#e8cfc4"></path>
  <rect x="76" y="37" width="2" height="15" fill="#d9c26a" transform="rotate(12 77 45)"></rect>
  <rect x="79" y="35" width="2.5" height="17" fill="#e6e6da"></rect>
  <rect x="82" y="38" width="2" height="14" fill="#b04a3a"></rect>
  <rect x="84.5" y="37" width="2" height="15" fill="#4a7ab8"></rect>
  <rect x="86.5" y="36" width="2.5" height="16" fill="#d9b040"></rect>
  <rect x="89" y="38" width="1" height="14" fill="#888"></rect>
  <rect x="3" y="51" width="87" height="1.5" fill="#6a6050"></rect>
  <rect x="8" y="48" width="8" height="3" fill="#7a8a80" opacity="0.6"></rect>
</svg>
<div class="a" style="left:829px;top:26px;width:1px;height:60px;background:#ddd"></div>
<!-- taskbar -->
<div id="task" class="a"></div>
<div class="a" style="left:179.5px;top:426px;width:20px;height:16px;background:#333c45"></div>
<div class="a" style="left:299px;top:426px;width:20px;height:16px;background:#b6661e"></div>
<svg class="a" style="left:0;top:426px" width="737" height="16">
  <g fill="#f2f2f2"><path d="M5 4.2l4-.6v4H5zM9.8 3.5l4.5-.7v4.8H9.8zM5 8.3h4v4L5 11.7zM9.8 8.3h4.5v5l-4.5-.7z"></path></g>
  <circle cx="31" cy="7" r="3.3" fill="none" stroke="#e8e8e8" stroke-width="1.1"></circle><path d="M28.6 9.5L25.5 12.5" stroke="#e8e8e8" stroke-width="1.2"></path>
  <circle cx="48.5" cy="8" r="3.8" fill="none" stroke="#eee" stroke-width="1.3"></circle>
  <path d="M64 5h7v6h-7zM63 4v8M72.5 4v8" fill="none" stroke="#ddd" stroke-width="0.9"></path>
  <path d="M84 5h4l1 1h5v6.5H84z" fill="#e8b630"></path><path d="M84 7.5h10v5H84z" fill="#f5cf55"></path><rect x="87.5" y="9" width="3" height="3.5" fill="#2a7ad0"></rect>
  <rect x="81.5" y="14.5" width="16" height="1.5" fill="#8e9ccf"></rect>
  <rect x="105" y="4" width="8.5" height="8.5" rx="1.5" fill="#f4f4fa"></rect><text x="106" y="10.5" font-size="5.5" font-weight="bold" fill="#6a3ab8" font-family="Liberation Sans">EN</text>
  <rect x="124.5" y="4" width="9" height="8.5" fill="#e53535"></rect><path d="M126.5 5.5l5 5.5M131.5 5.5l-5 5.5" stroke="#fff" stroke-width="1"></path>
  <circle cx="149" cy="8" r="4.5" fill="#1e7fd8"></circle><path d="M145 7c1-3.5 7-4.5 8.5 0-1.5 1-3 1-4 0 0 2 2 3.5 4 3-1 2-6 3-8.5-1z" fill="#40c080"></path><circle cx="149" cy="8.5" r="1.8" fill="#0d4fa0"></circle>
  <rect x="141.5" y="14.5" width="16" height="1.5" fill="#8e9ccf"></rect>
  <circle cx="169" cy="8" r="4" fill="#6cc043"></circle><path d="M167 7.5h4M167.5 9.5h3" stroke="#e8ffe0" stroke-width="0.8"></path>
  <path d="M183 4.5l3 7 2-4.5 2 4.5 3.5-7" fill="none" stroke="#e8402a" stroke-width="2"></path>
  <rect x="179.5" y="14.5" width="20" height="1.5" fill="#8e9ccf"></rect>
  <rect x="204.5" y="4" width="9" height="2.5" fill="#3a9ad8"></rect><rect x="204.5" y="6.5" width="9" height="2.5" fill="#e0a030"></rect><rect x="204.5" y="9" width="9" height="2" fill="#d04a3a"></rect><rect x="204.5" y="11" width="9" height="1.5" fill="#5ab04a"></rect>
  <rect x="201" y="14.5" width="15.5" height="1.5" fill="#7e8cb8"></rect>
  <rect x="225" y="4" width="8.5" height="8.5" rx="1" fill="#f5b52a"></rect><path d="M225 4h4v4h-4z" fill="#2aa0e0"></path><path d="M229 8h4.5v4.5H229z" fill="#e84a6a"></path><path d="M225 8h4v4.5h-4z" fill="#60c070"></path>
  <rect x="221" y="14.5" width="16" height="1.5" fill="#7e8cb8"></rect>
  <rect x="245" y="4" width="8.5" height="8.5" fill="#1c6ee0"></rect><path d="M246 10l2-3 1.5 2 1.5-2 2 3" fill="none" stroke="#fff" stroke-width="0.9"></path>
  <rect x="241" y="14.5" width="16" height="1.5" fill="#7e8cb8"></rect>
  <rect x="265" y="4" width="8.5" height="8.5" fill="#7a3ad0"></rect><rect x="266" y="5" width="4" height="6.5" fill="#eee"></rect><circle cx="271" cy="10" r="2" fill="#e84a8a"></circle>
  <rect x="261" y="14.5" width="16" height="1.5" fill="#7e8cb8"></rect>
  <circle cx="289" cy="8" r="4.3" fill="#f0f0f0"></circle><path d="M287 6l4 4M291 6l-4 4" stroke="#333" stroke-width="0.9"></path>
  <rect x="281" y="14.5" width="16" height="1.5" fill="#7e8cb8"></rect>
  <ellipse cx="306.5" cy="7" rx="3.8" ry="3" fill="#4ec24a"></ellipse><ellipse cx="311" cy="9.5" rx="3.3" ry="2.6" fill="#f4f4f4"></ellipse>
  <rect x="299" y="14.5" width="20" height="1.5" fill="#e8862a"></rect>
  <!-- tray -->
  <path d="M556 3.5a5 5 0 1 1-5 6.5 4 4 0 0 0 5-6.5z" fill="#f3c531"></path>
  <path d="M605.5 10l3-3 3 3" fill="none" stroke="#ddd" stroke-width="1"></path>
  <rect x="618" y="5.5" width="8.5" height="5" fill="#e8e8e8"></rect><rect x="617" y="6.5" width="1" height="3" fill="#e8e8e8"></rect><rect x="617.5" y="4" width="2" height="1.5" fill="#e8e8e8"></rect>
  <path d="M630.5 6.5h2l2.5-2.5v8l-2.5-2.5h-2z" fill="#ddd"></path><path d="M636.5 6c1 1 1 3 0 4M638 5c1.7 1.7 1.7 4.3 0 6" stroke="#999" stroke-width="0.6" fill="none"></path>
  <path d="M644 12l7-7M646.5 12l4.5-4.5M649 12l2-2M651 5v7" stroke="#aaa" stroke-width="0.8" fill="none"></path>
  <rect x="671" y="3" width="9.5" height="10" rx="2" fill="#f06a1e"></rect><text x="672.5" y="11.5" font-size="9" font-weight="bold" fill="#fff" font-family="Liberation Sans">S</text>
  <path d="M716 3.5h9.5v7h-3l-2 2v-2h-4.5z" fill="none" stroke="#ddd" stroke-width="0.9"></path>
</svg>
<div class="t" style="left:566px;top:430px;font-size:8px;color:#e8e8e8">0°C</div>
<div class="t" style="left: 584px; top: 430.5px; font-size: 7.5px; color: rgb(224, 224, 224); --cw: 8px;"><i>晴</i><i>朗</i></div>
<div class="t" style="left: 656.5px; top: 430.5px; font-size: 7.5px; color: rgb(224, 224, 224); --cw: 8px;"><i>英</i></div>
<div class="t" style="left:689px;top:430.5px;font-size:7.5px;color:#e0e0e0">21:17</div>
<div class="a" style="left:736px;top:426px;width:1px;height:16px;background:#33404a"></div>

<!-- meeting controls -->
<div class="a" style="left:710px;top:446px;width:120px;height:21px;background:#2b2b2e;border-radius:2px 0 0 0"></div>
<div class="a" style="left:710px;top:446px;width:39px;height:21px;background:#232326;border-radius:2px 0 0 0"></div>
<div class="a" style="left:749px;top:446px;width:40px;height:21px;background:#3a3a3c"></div>
<svg class="a" style="left:720px;top:449px" width="62" height="16">
  <rect x="7" y="2.5" width="4" height="7" rx="2" fill="#e8e8e8"></rect><path d="M5.5 7.5a3.5 3.5 0 0 0 7 0M9 11v2.5M7 13.5h4" stroke="#e8e8e8" stroke-width="0.9" fill="none"></path>
  <path d="M4.5 13L13.5 3" stroke="#d03a30" stroke-width="1.1"></path>
  <rect x="43.5" y="5" width="8" height="6.5" fill="#eee"></rect><path d="M51.5 7.5l3.5-2v6.5l-3.5-2z" fill="#eee"></path>
  <path d="M43 12.5l9-8.5" stroke="#d03a30" stroke-width="1.2"></path>
</svg>
<div class="a" style="left: 783.5px; top: 452px; width: 36.5px; height: 12.5px; background: rgb(250, 250, 250); border: 1px solid rgb(85, 85, 85); font-size: 7.8px; color: rgb(34, 34, 34); line-height: 10.5px; text-align: center; white-space: nowrap; --cw: 8px;"><i>开</i><i>启</i><i>视</i><i>频</i></div>

</body></html>
